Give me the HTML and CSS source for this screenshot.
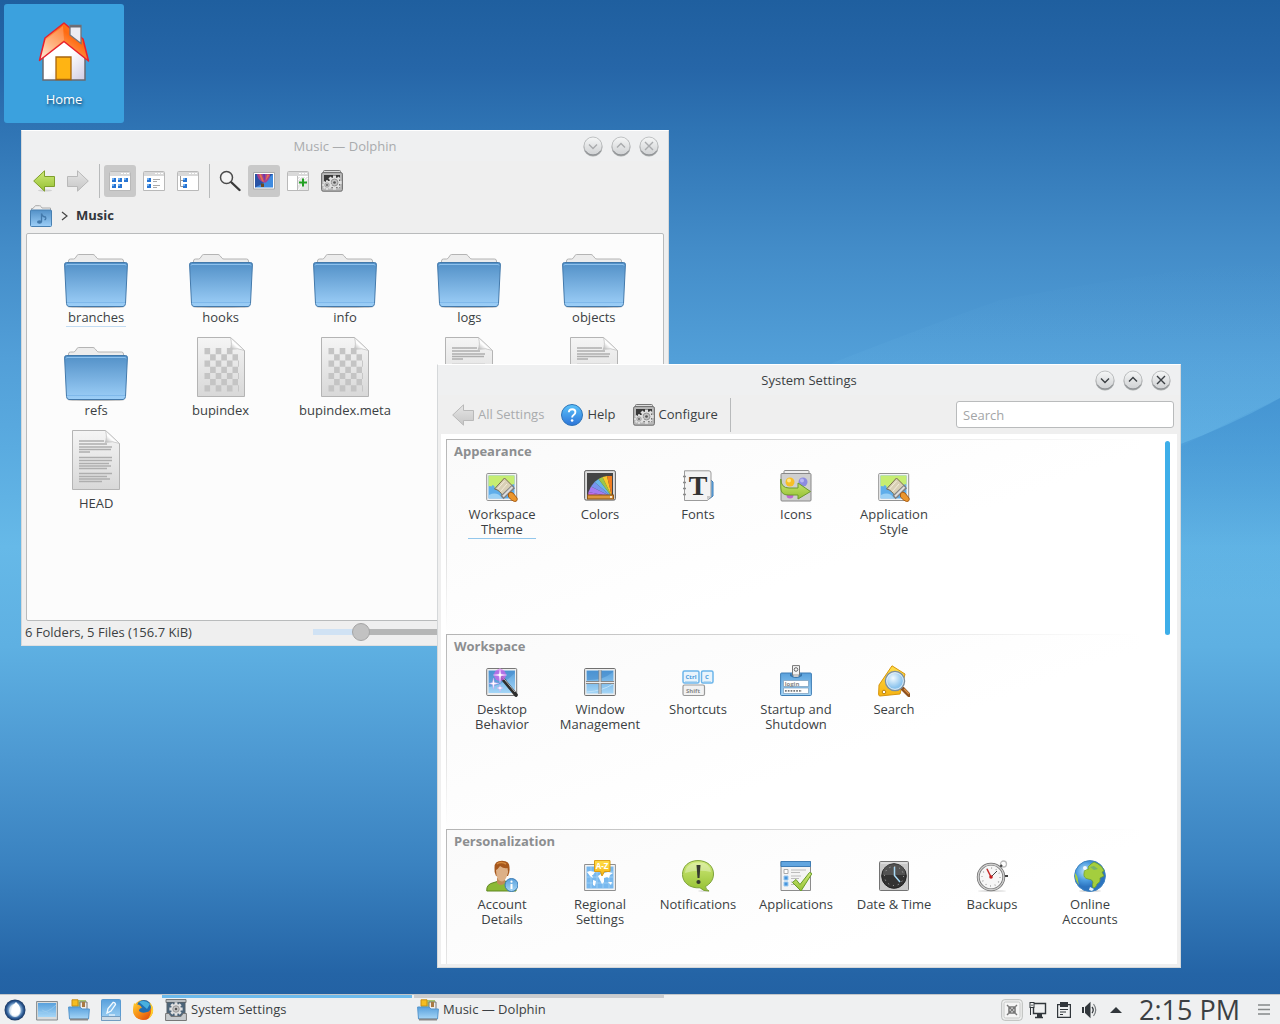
FILE: index.html
```html
<!DOCTYPE html>
<html lang="en">
<head>
<meta charset="utf-8">
<meta name="viewport" content="width=device-width, initial-scale=1">
<title>Plasma Desktop</title>
<link rel="stylesheet" href="styles.css">
</head>
<body>
<svg class="sprite" aria-hidden="true">
  <defs>
    <linearGradient id="g-folder" x1="0" y1="0" x2="0" y2="1"><stop offset="0" stop-color="#5290c7"/><stop offset="1" stop-color="#9dcff8"/></linearGradient>
    <linearGradient id="g-paper" x1="0" y1="0" x2="0" y2="1"><stop offset="0" stop-color="#f5f5f5"/><stop offset="1" stop-color="#d8d8d8"/></linearGradient>
    <linearGradient id="g-fold" x1="0" y1="1" x2="1" y2="0"><stop offset="0" stop-color="#a8a8a8"/><stop offset=".4" stop-color="#ffffff"/><stop offset="1" stop-color="#cdcdcd"/></linearGradient>
    <linearGradient id="g-green" x1="0" y1="0" x2="0" y2="1"><stop offset="0" stop-color="#d0ea7a"/><stop offset="1" stop-color="#94c032"/></linearGradient>
    <linearGradient id="g-gray" x1="0" y1="0" x2="0" y2="1"><stop offset="0" stop-color="#e6e6e6"/><stop offset="1" stop-color="#c6c6c6"/></linearGradient>
    <linearGradient id="g-blue" x1="0" y1="0" x2="0" y2="1"><stop offset="0" stop-color="#58a0dc"/><stop offset="1" stop-color="#a5d6f7"/></linearGradient>
    <linearGradient id="g-help" x1="0" y1="0" x2="0" y2="1"><stop offset="0" stop-color="#5cc4fb"/><stop offset="1" stop-color="#2d74d8"/></linearGradient>
    <linearGradient id="g-yellow" x1="0" y1="0" x2="0" y2="1"><stop offset="0" stop-color="#ffdf4a"/><stop offset="1" stop-color="#f6b312"/></linearGradient>
    <linearGradient id="g-roof" x1="0" y1="1" x2="1" y2="0"><stop offset="0" stop-color="#fff0e0"/><stop offset=".35" stop-color="#ffa060"/><stop offset=".65" stop-color="#ff6a10"/><stop offset="1" stop-color="#ff8030"/></linearGradient>
    <linearGradient id="g-wall" x1="0" y1="0" x2="1" y2="1"><stop offset=".5" stop-color="#ffffff"/><stop offset="1" stop-color="#d0cce4"/></linearGradient>
    <linearGradient id="g-button" x1="0" y1="0" x2="0" y2="1"><stop offset="0" stop-color="#f6f7f7"/><stop offset="1" stop-color="#cfd1d3"/></linearGradient>
    <linearGradient id="g-orange" x1="0" y1="0" x2="1" y2="1"><stop offset="0" stop-color="#ffce2e"/><stop offset=".5" stop-color="#f58a16"/><stop offset="1" stop-color="#dc3d10"/></linearGradient>
    <radialGradient id="g-ring"><stop offset=".55" stop-color="#8db4d8"/><stop offset=".8" stop-color="#2f5c96"/><stop offset="1" stop-color="#16345f"/></radialGradient>
    <radialGradient id="g-globe" cx=".35" cy=".35"><stop offset="0" stop-color="#c0e4fb"/><stop offset=".6" stop-color="#4b9ce0"/><stop offset="1" stop-color="#2c74c0"/></radialGradient>
    <radialGradient id="g-lens" cx=".4" cy=".35"><stop offset="0" stop-color="#f2faff"/><stop offset="1" stop-color="#8cc4ee"/></radialGradient>
  </defs>

  <symbol id="home" viewBox="0 0 64 64">
    <path d="M11 38 32 21 53 39V62H11Z" fill="url(#g-wall)" stroke="#6a6a70" stroke-width="1.5"/>
    <path d="M24 39h15v22.500h-15z" fill="#ffb413" stroke="#a8650e" stroke-width="1.300"/>
    <path d="M32 5 13 20 7.500 42.500 32 23.500 56.500 43 51 21Z" fill="url(#g-roof)" stroke="#e8202c" stroke-width="1.500" stroke-linejoin="round"/>
    <path d="M13.500 22 31 8 32 22 9 40Z" fill="#fff" opacity=".22"/>
    <path d="M38 7.500h11v18l-11-8.500z" fill="#ececf3" stroke="#73737a" stroke-width="1.300"/>
    <path d="M38 8.500h11" stroke="#6b6b72" stroke-width="2"/>
  </symbol>

  <symbol id="folder" viewBox="0 0 64 64">
    <ellipse cx="32" cy="63" rx="28" ry="1" fill="#777" opacity=".5"/>
    <path d="M4.500 20V17q0-2 2-2h3q1.500 0 2.500-2l1.200-1.800q.5-.7 1.500-.7H29q1.200 0 2 1.200l2 2.500q.6.800 2 .8H57.500q2 0 2 2v3z" fill="#ececec" stroke="#b4b4b4"/>
    <path d="M.6 21Q.3 18.500 2.500 18.500H61.500Q63.700 18.500 63.400 21L61.500 59.500Q61.300 62.500 59 62.500H5Q2.700 62.500 2.500 59.500Z" fill="url(#g-folder)" stroke="#4379ab"/>
    <path d="M2 21.500Q2 20.500 3 20.500H61Q62 20.500 62 21.500" fill="none" stroke="#8cc0ec"/>
    <path d="M3 58.500H61" stroke="#7fb8ea"/>
  </symbol>
  <symbol id="page" viewBox="0 0 64 64">
    <path d="M8.500.5H41.500L55.500 13.500V59.500H8.500Z" fill="url(#g-paper)" stroke="#b4b4b4"/>
    <path d="M41.500.5Q43.500 8 41 12.500 49 10.500 55.500 13.500Z" fill="url(#g-fold)" stroke="#bdbdbd" stroke-width=".7"/>
  </symbol>
  <symbol id="file-text" viewBox="0 0 64 64">
    <use href="#page"/>
    <path d="M15 11H40M15 14H43M15 17H48M15 19.500H47M15 22H26M15 27.500H48M15 30.500H48M15 33.500H45M15 36H47M15 38.500H43M15 43.500H48M15 46.500H43M15 49H46M15 51.500H38" stroke="#aeaeae" stroke-width="1.600"/>
  </symbol>
  <symbol id="file-bin" viewBox="0 0 64 64">
    <use href="#page"/>
    <g stroke="#c4c4c4" stroke-width="6.200" fill="none" stroke-dasharray="5.600 5.600">
      <path d="M15.500 14.200H49M15.500 26.600H50M15.500 39H50M15.500 51.400H50"/>
      <path d="M21.100 20.400H49M21.100 32.800H49M21.100 45.200H49"/>
    </g>
  </symbol>

  <symbol id="arrow-left" viewBox="0 0 22 22"><ellipse cx="12" cy="20.500" rx="7" ry="1" opacity=".12"/><path d="M.7 11 11.500.8V6.500H21.500V16.500H11.500V21.200Z" fill="url(#g-green)" stroke="#7f9f2c"/></symbol>
  <symbol id="arrow-left-off" viewBox="0 0 22 22"><path d="M.7 11 11.500.8V6.500H21.500V16.500H11.500V21.200Z" fill="url(#g-gray)" stroke="#b9b9b9"/></symbol>
  <symbol id="arrow-right-off" viewBox="0 0 22 22"><path d="M21.300 11 10.500.8V6.500H.5V16.500H10.500V21.200Z" fill="url(#g-gray)" stroke="#b9b9b9"/></symbol>
  <symbol id="view-frame" viewBox="0 0 22 22"><path d="M.5 2.500Q.5 1.500 1.500 1.500H20.500Q21.500 1.500 21.500 2.500V20.500H.5Z" fill="#fff" stroke="#b9b9b9"/><path d="M1 2H21V6H1Z" fill="#d9d9d9"/><path d="M12 3.500h2M15 3.500h2M18 3.500h2" stroke="#fff"/></symbol>
  <symbol id="view-icons" viewBox="0 0 22 22"><use href="#view-frame"/><path d="M3 8h4v4H3zM9 8h4v4H9zM15 8h4v4h-4zM3 14h4v4H3zM9 14h4v4H9z" fill="#2774d2"/><path d="M3 8h2v2H3zM9 8h2v2H9zM15 8h2v2h-2zM3 14h2v2H3zM9 14h2v2H9z" fill="#72b2f4"/></symbol>
  <symbol id="view-compact" viewBox="0 0 22 22"><use href="#view-frame"/><path d="M4 8h4v4H4zM4 14h4v4H4z" fill="#2774d2"/><path d="M4 8h2v2H4zM4 14h2v2H4z" fill="#72b2f4"/><path d="M10 9.500h7M10 11.500h4M10 15.500h7M10 17.500h4" stroke="#aaa"/></symbol>
  <symbol id="view-tree" viewBox="0 0 22 22"><use href="#view-frame"/><path d="M3.500 6V16.500H6M3.500 10.500H6" stroke="#999" fill="none"/><path d="M6 8h4v4H6zM6 14h4v4H6z" fill="#2774d2"/><path d="M6 8h2v2H6zM6 14h2v2H6z" fill="#72b2f4"/></symbol>
  <symbol id="find" viewBox="0 0 22 22"><path d="M12 12 20.500 20" stroke="#3a3a3a" stroke-width="2.400" stroke-linecap="round"/><circle cx="7.500" cy="7.500" r="6" fill="#f4f4f4" stroke="#4a4a4a" stroke-width="1.500"/></symbol>
  <symbol id="preview" viewBox="0 0 22 22"><path d="M.5 2.500h21v16.500H.5z" fill="#fff" stroke="#aaa"/><path d="M2 4h18v13.500H2z" fill="#3f8be0"/><path d="M2 4h18L9 14 2 17.500z" fill="#213c8c" opacity=".7"/><path d="M4 4H17Q18 8 13 12.500H10Q4 9 4 4Z" fill="#a8408f"/><path d="M6 4.500 8 4 11 12 9 11ZM14 4.500 16.500 5 12.500 11Z" fill="#e5734c"/><path d="M10 4h2l-.5 7z" fill="#5f3fa8"/><path d="M8 13.500h3V17H8z" fill="#6d4a20"/></symbol>
  <symbol id="split" viewBox="0 0 22 22"><use href="#view-frame"/><path d="M11 7h10v13H11z" fill="#e6e6e6"/><path d="M11 10l4-4M11 20l10-12M11 15l8-8" stroke="#fff"/><path d="M10.500 6V20" stroke="#bbb"/><path d="M12 12.500h8M16 8.500v8" stroke="#22a022" stroke-width="2"/></symbol>
  <symbol id="cog" viewBox="-10 -10 20 20">
    <path d="M0-9.500V9.500M-9.500 0H9.500M-6.700-6.700 6.700 6.700M-6.700 6.700 6.700-6.700" stroke="#e0e0e0" stroke-width="4"/>
    <circle r="7" fill="#e0e0e0"/>
    <circle r="4.600" fill="#c4c4c4" stroke="#8f8f8f" stroke-width="1.200"/>
    <circle r="1.800" fill="#555"/>
  </symbol>
  <symbol id="configure" viewBox="0 0 22 22"><path d="M2.500 3V1.500q0-1 1-1h15q1 0 1 1V3" fill="#ddd" stroke="#777"/><rect x=".6" y="2.600" width="20.800" height="18.600" rx="1.500" fill="#b8b8b8" stroke="#6c6c6c"/><path d="M3 5h16v13H3z" fill="#393939"/><use href="#cog" x="6" y="5" width="15" height="15"/><use href="#cog" x="1" y="10" width="10" height="10"/></symbol>
  <symbol id="folder-music" viewBox="0 0 22 22"><path d="M1.500 6V3.500H3L4.500 1.500Q5 .7 6 .7H9.500Q10.500.7 11 1.500L12 3H20.500V6Z" fill="#eee" stroke="#aaa"/><rect x=".5" y="5" width="21" height="16.500" rx="1" fill="url(#g-folder)" stroke="#4880b2"/><path d="M11.500 17V8.500q1 3.500 4 3.500 1 2-1 3" stroke="#4379ab" stroke-width="1.300" fill="none"/><ellipse cx="9.500" cy="17" rx="2.500" ry="1.800" fill="#4379ab"/></symbol>
  <symbol id="help" viewBox="0 0 22 22"><circle cx="11" cy="11" r="10.500" fill="url(#g-help)" stroke="#2e74b8"/><path d="M7.800 8.300Q8 5.200 11.200 5.200q3.200 0 3.200 2.800 0 1.800-1.800 3-1.500 1-1.500 2.600" stroke="#fff" stroke-width="1.900" fill="none"/><circle cx="11.100" cy="16.500" r="1.300" fill="#fff"/></symbol>

  <symbol id="w-base" viewBox="0 0 22 22"><circle cx="11" cy="12" r="9.500" fill="#55585c" opacity=".45"/><circle cx="11" cy="11" r="9" fill="url(#g-button)" stroke="#b4b6b8" stroke-width=".8"/><path d="M3.500 16a9 9 0 0 0 15 0" fill="none" stroke="#85888c"/></symbol>
  <symbol id="w-min" viewBox="0 0 22 22"><use href="#w-base"/><path d="M7 9.500 11 13.500 15 9.500" fill="none" stroke="currentColor" stroke-width="1.400"/></symbol>
  <symbol id="w-max" viewBox="0 0 22 22"><use href="#w-base"/><path d="M7 12.500 11 8.500 15 12.500" fill="none" stroke="currentColor" stroke-width="1.400"/></symbol>
  <symbol id="w-close" viewBox="0 0 22 22"><use href="#w-base"/><path d="M7 7 15 15M15 7 7 15" fill="none" stroke="currentColor" stroke-width="1.400"/></symbol>

  <symbol id="theme" viewBox="0 0 32 32">
    <rect x=".7" y="3.500" width="30" height="27" rx="1" fill="#f4f4f4" stroke="#929292"/><path d="M2.500 5.500h26v23h-26z" fill="#5fadea"/><path d="M2.500 5.500h26v9q-2-1-3 1-2-3-4 0-1 4-2 0-2-2-4 1-1 5-2 0-2-2-3 0-1 5-2 0-2-3-3 0-2-1-3 0z" fill="#c6ed72"/><path d="M3 25q8-4 13 3H3z" fill="#9ad0f5"/>
    <path d="M8.500 19 18.500 8 27 16.500 17 26.500Q14 20 8.500 19Z" fill="#d9d0b6" stroke="#786b4e"/><path d="M11.500 19 18.500 11M14.500 21.500 21 14" stroke="#f3ecda"/><path d="M16 27.500 27.500 16.500" stroke="#808080" stroke-width="4.500"/><path d="M17 26.500 26.500 17" stroke="#ddd" stroke-width="2.200"/><path d="M22.500 23.500Q25 21 27 23L31 28Q32 31.500 28.500 31.500 26 31 22.500 27Z" fill="#eb962d" stroke="#a75d16"/>
  </symbol>
  <symbol id="colors" viewBox="0 0 32 32">
    <rect x=".6" y=".6" width="30.800" height="29.500" rx="1.500" fill="#dcdcdc" stroke="#606060"/><path d="M3 3h26v24H3z" fill="#444"/><path d="M28 27H4L4.500 22Z" fill="#c269eb"/><path d="M28 27 4.500 22 7 16.500Z" fill="#a57af0"/><path d="M28 27 7 16.500 10.500 12Z" fill="#7794ef"/><path d="M28 27 10.500 12 14.500 9Z" fill="#69b5e9"/><path d="M28 27 14.500 9 18.500 7Z" fill="#9ac64a"/><path d="M28 27 18.500 7 23 6Z" fill="#f7c82b"/><path d="M28 27 23 6H28Z" fill="#f07e22"/><rect x="3.500" y="25" width="26" height="4" fill="#dc963d" stroke="#8b5516"/><circle cx="27" cy="27" r="1" fill="#fff"/>
  </symbol>
  <symbol id="icons" viewBox="0 0 32 32">
    <path d="M4 4V1.500q0-1 1-1h23q1 0 1 1V4" fill="#eee" stroke="#8c8c8c"/><rect x="1" y="3.500" width="30" height="27.500" rx="1" fill="#cfcfcf" stroke="#888"/><circle cx="10" cy="12" r="4.500" fill="#f7bf26"/><circle cx="9" cy="10.500" r="2" fill="#ffe68a"/><circle cx="23" cy="12" r="4.500" fill="#8c8be0"/><circle cx="22" cy="10.500" r="2" fill="#b9b8f2"/><circle cx="10" cy="25" r="3.500" fill="#bf67d0"/><path d="M.8 9Q1 18 9 18H18V13L30.500 21.500 18 29V25H8Q1 25 .8 18Z" fill="url(#g-green)" stroke="#6c9a2d"/>
  </symbol>
  <symbol id="desktop" viewBox="0 0 32 32">
    <rect x=".7" y="3.500" width="30" height="27" rx="1" fill="#eee" stroke="#777"/><path d="M2.500 5.500h26.500v22.500h-26.500z" fill="url(#g-blue)"/><path d="M3 22Q18 20 28.500 8V6H3Z" fill="#3f86c8" opacity=".5"/><path d="M16 13 30 30" stroke="#2d2d2d" stroke-width="3.600" stroke-linecap="round"/><path d="M16.500 12 29 27" stroke="#b8b8b8" stroke-width="1"/><circle cx="14" cy="10" r="6" fill="#cf66ec" opacity=".75"/><path d="M14 3 15 9 21 10 15 11 14 18 13 11 7 10 13 9ZM7.500 13 8.300 17.500 13 18.500 8.300 19.500 7.500 24 6.500 19.500 3 18.500 6.500 17.500ZM14 20 14.500 22 17 23 14.500 24 14 26.500 13.500 24 11 23 13.500 22Z" fill="#fff" stroke="#dd9cf6" stroke-width=".4"/>
  </symbol>
  <symbol id="window" viewBox="0 0 32 32">
    <rect x=".6" y="3.500" width="30.800" height="27" rx="1" fill="#eee" stroke="#707070"/><path d="M2.500 5.500h27v23h-27z" fill="url(#g-blue)"/><path d="M3 15Q18 16 29 7V6H3Z" fill="#3f86c8" opacity=".55"/><path d="M3 27Q18 26 29 19" stroke="#bfe1f8" fill="none"/><path d="M16 5V29M2 17.500H30" stroke="#888" stroke-width="3"/><path d="M16 4V30M1 17.500H31" stroke="#eee"/>
  </symbol>
  <symbol id="search" viewBox="0 0 32 32">
    <path d="M14 .8 27 9 22 29 2 31Q.6 31 .6 29L1 20Z" fill="url(#g-yellow)" stroke="#d6950d"/><circle cx="6" cy="27" r="1.800" fill="#fff" stroke="#b8800d"/><path d="M24.500 23.500 31 30" stroke="#8e511e" stroke-width="4" stroke-linecap="round"/><path d="M26 24 31 29" stroke="#da9148" stroke-width="1.200"/><circle cx="17" cy="16" r="9.500" fill="url(#g-lens)" stroke="#7e8f9e" stroke-width="1.500"/><circle cx="17" cy="16" r="8.400" fill="none" stroke="#fff" opacity=".7"/>
  </symbol>
  <symbol id="account" viewBox="0 0 32 32">
    <path d="M.8 31Q0 24 8 22.500L16 20 23 22.500Q31 24 30 31Z" fill="#8cb936" stroke="#5f8720"/><path d="M11 18h8v5q-4 4-8 0z" fill="#c18b58"/><path d="M8.500 8Q8 .8 16 .8T23.500 8Q24 12 22 16H10Q8 12 8.500 8Z" fill="#a6571c"/><path d="M10 10Q12 9 14 6 18 9 21.500 8 23 12 21 16 19 21 16 21.500 12 21 10.500 16Z" fill="#ddb087"/><path d="M11 4q4-3 9 0" stroke="#d48a3f" stroke-width="1.500" fill="none"/><circle cx="25.500" cy="25" r="6.500" fill="url(#g-blue)" stroke="#3a7ab4"/><circle cx="25.500" cy="21.700" r="1.100" fill="#fff"/><path d="M25.500 24V29" stroke="#fff" stroke-width="2"/>
  </symbol>
  <symbol id="notify" viewBox="0 0 32 32">
    <ellipse cx="22" cy="31" rx="6" ry=".8" opacity=".15"/><path d="M16 .6C25 .6 31.500 6 31.500 14 31.500 20 28 24 23.500 26.500Q23.500 29.500 27 31 21.500 31.500 18 27.800C7 28.500.5 22 .5 14.500.5 6 7 .6 16 .6Z" fill="url(#g-green)" stroke="#7da23a"/><path d="M3 13Q4 3 16 2.500T29 12Q16 9 3 13Z" fill="#fff" opacity=".3"/><path d="M14.500 5h4L17.500 18h-2z" fill="#363a30"/><circle cx="16.500" cy="22" r="2.100" fill="#363a30"/>
  </symbol>
  <symbol id="apps" viewBox="0 0 32 32">
    <path d="M1 1.500h29.500v29H1z" fill="#f4f4f4" stroke="#8c8c8c"/><path d="M1 1.500h29.500v5H1z" fill="#61a5df" stroke="#3d7cb5"/><path d="M11 10h15M11 12.500h9M11 16h10M11 18.500h8M11 22h7M11 24.500h5" stroke="#bcbcbc"/><path d="M4 9.500h4v4H4z" fill="#fff" stroke="#aaa"/><path d="M4 16h4v4H4zM4 22h4v4H4z" fill="#4795dc" stroke="#9ecbf0"/><path d="M12.500 22.500 16 19.500 20 24.500 29.500 12.500 32 13.500 21 31Z" fill="url(#g-green)" stroke="#679c25"/>
  </symbol>
  <symbol id="clock" viewBox="0 0 32 32">
    <rect x="1.500" y="1.500" width="29" height="29" rx="1" fill="#c9c9c9" stroke="#737373"/><path d="M3 3h26" stroke="#efefef"/><circle cx="16" cy="16" r="12.300" fill="#333" stroke="#222"/><path d="M4.500 15Q5 4 16 4T27.500 15Z" fill="#777" opacity=".45"/><circle cx="16" cy="16" r="9.500" fill="none" stroke="#bbb" stroke-dasharray="1 3.970"/><path d="M16.500 7V15.500L22 22" stroke="#a7d9f5" stroke-width="1.500" fill="none"/>
  </symbol>
  <symbol id="backups" viewBox="0 0 32 32">
    <ellipse cx="16" cy="31" rx="14" ry="1" opacity=".12"/><circle cx="27.500" cy="4" r="3" fill="none" stroke="#bbb" stroke-width="1.300"/><path d="M23 8 26 5M28 16h4" stroke="#444" stroke-width="2"/><circle cx="15" cy="17" r="12.800" fill="#f7f7f7" stroke="#6a6a6a" stroke-width="2.800"/><circle cx="15" cy="17" r="12.800" fill="none" stroke="#cfcfcf" stroke-width="1.400"/><circle cx="15" cy="17" r="9" fill="none" stroke="#999" stroke-width="1.300" stroke-dasharray=".9 3.810"/><path d="M15 17 11 9" stroke="#c42929" stroke-width="1.500"/><path d="M15 17 21 11" stroke="#444"/><circle cx="15" cy="17" r="1.800" fill="#c42020"/>
  </symbol>
  <symbol id="online" viewBox="0 0 32 32">
    <ellipse cx="16" cy="31" rx="11" ry="1" opacity=".15"/><circle cx="16" cy="16" r="15.400" fill="url(#g-globe)" stroke="#3f83c0"/><path d="M10 13Q10 9 15 9L14 7 17 4 20 2Q28 5 30 11L28 12 30 16 26 18Q27 22 23 24 22 28 19 28 18 24 19 22 18 19 14 19 9 18 10 13Z" fill="#a4ce3e" stroke="#6b9c25" stroke-width=".7"/><path d="M16 7 20 6 24 9 20 10Z" fill="#77b36a"/><path d="M1 13Q4 16 4 21L5 25Q1 20 1 15Z" fill="#a4ce3e"/><path d="M16 27 20 29 18 31 15 30Z" fill="#e7f3fc"/><circle cx="11" cy="8" r="2" fill="#fff" opacity=".9"/>
  </symbol>

  <symbol id="launcher" viewBox="0 0 22 22"><circle cx="11" cy="11" r="10.500" fill="url(#g-ring)"/><ellipse cx="11" cy="11.500" rx="5.800" ry="6.500" fill="#dfe9f2"/><path d="M12 3Q18 8 15 15 12 18 8 16 5 9 12 3Z" fill="#fff"/></symbol>
  <symbol id="show-desktop" viewBox="0 0 22 22"><path d="M.6 2.500h20.800v18.500H.6z" fill="#d9dcdd" stroke="#858a8e"/><path d="M2 4h18v14H2z" fill="url(#g-blue)"/><path d="M2 13Q11 15 20 6M6 11Q12 15 20 15" stroke="#9dcdef" stroke-width=".7" fill="none"/></symbol>
  <symbol id="file-manager" viewBox="0 0 22 22"><path d="M4 1h14v12H4z" fill="#a9c671"/><path d="M4 .8h6V7H4z" fill="#f4bd20" stroke="#c88d14"/><path d="M12 3h7v9h-7z" fill="#eee" stroke="#777"/><path d="M14 3h3v5h-3z" fill="#a97942"/><path d="M.6 8H12L14 10H21.400L20.500 20H1.500Z" fill="url(#g-blue)" stroke="#5596cd"/><path d="M2 19.500H20V21.500H2Z" fill="#888"/></symbol>
  <symbol id="editor" viewBox="0 0 22 22"><rect x="1.500" y=".5" width="19" height="21" rx="1" fill="url(#g-blue)" stroke="#5a9bd2"/><path d="M1.500 17.500h19v4h-19z" fill="#cddbe6" stroke="#739cc0"/><path d="M7 14 8 9.500 13 3.500Q15 3 15.500 5.500L11 12Z" fill="#80bdec" stroke="#f5fbff" stroke-width="1.300"/><path d="M9 16h6" stroke="#fff"/></symbol>
  <symbol id="browser" viewBox="0 0 22 22"><circle cx="11" cy="11" r="10" fill="url(#g-orange)"/><circle cx="12" cy="8.500" r="7.500" fill="#216fb3"/><path d="M7 3Q13 0 18 5L15 10Z" fill="#48b0de"/><path d="M2 4Q4 6 6 5.500 9 6 10 9 7 9 7 12 10 15 15 13 18 13 19 8 23 16 15 20.500 4 22 1.500 14 .7 9 2 4Z" fill="url(#g-orange)"/><path d="M19 8Q18.500 5 17 3 22 7 21 13 20 18 16 20 20 15 19 8Z" fill="#ffd02c"/></symbol>
  <symbol id="settings" viewBox="0 0 22 22"><path d="M1 .5h20v3H1z" fill="#b9bdc0" stroke="#777"/><path d="M2 3.500h18V19H2z" fill="#4c6479" stroke="#56626b"/><use href="#cog" x="4" y="3" width="14" height="14"/><path d="M.6 14.500H4L6 17.500H16L18 14.500H21.400V21.500H.6Z" fill="#c6cacd" stroke="#777"/></symbol>

  <symbol id="tray-x" viewBox="0 0 22 22"><rect x=".7" y=".7" width="20.600" height="20.600" rx="3" fill="#f0f1f1" stroke="#b9bcba"/><rect x="3" y="3" width="16" height="16" rx="1.500" fill="#f5f5f5" stroke="#c6c8c6"/><path d="M6 6 16 16M16 6 6 16" stroke="#777" stroke-width="1.400"/><circle cx="11" cy="11" r="3" fill="none" stroke="#777" stroke-width="1.200"/><path d="M7.500 7.500h7v7h-7z" fill="none" stroke="#888" stroke-width=".8"/></symbol>
  <symbol id="tray-net" viewBox="0 0 18 18"><path d="M5 2.500H16.500V12.500H4.500V7M10.500 13V16M6 16.500H14" stroke="#31363b" stroke-width="1.400" fill="none"/><path d="M8 13h5v3H8z" fill="#31363b"/><rect x="1" y="1.500" width="4" height="5" fill="#eff0f1" stroke="#31363b"/><path d="M3 3.500V5M1.500 6.500V14" stroke="#31363b"/></symbol>
  <symbol id="tray-clip" viewBox="0 0 18 18"><path d="M2.600 3.600H15.400V16.400H2.600Z" fill="none" stroke="#31363b" stroke-width="1.200"/><path d="M5 1H13V6H5Z" fill="#31363b"/><path d="M5 8.500H13M5 11H11M5 13.500H8" stroke="#31363b"/></symbol>
  <symbol id="tray-volume" viewBox="0 0 18 18"><path d="M1 6H3V12H1ZM4 6 9.500.8V17.200L4 12Z" fill="#31363b"/><path d="M11 6Q13.500 9 11 12" stroke="#31363b" stroke-width="1.300" fill="none"/><path d="M12.500 3Q17 9 12.500 15" stroke="#777b7e" stroke-width="1.200" fill="none"/></symbol>
  <symbol id="tray-up" viewBox="0 0 12 6"><path d="M0 6 6 0 12 6Z" fill="#31363b"/></symbol>
  <symbol id="tray-menu" viewBox="0 0 12 12"><path d="M0 1H12M0 5.500H12M0 10H12" stroke="#858889" stroke-width="1.500"/></symbol>
</svg>

<main class="desktop">
  <svg class="wallpaper" viewBox="0 0 1280 994" preserveAspectRatio="none" aria-hidden="true">
    <defs>
      <linearGradient id="wave" x1="0" y1="0" x2="0" y2="1"><stop offset="0" stop-color="#2f80c6" stop-opacity=".42"/><stop offset="1" stop-color="#2f80c6" stop-opacity="0"/></linearGradient>
      <linearGradient id="wave-b" x1="0" y1="0" x2="0" y2="1"><stop offset="0" stop-color="#7cc8f2" stop-opacity="0"/><stop offset="1" stop-color="#7cc8f2" stop-opacity=".18"/></linearGradient>
    </defs>
    <path d="M640 440Q860 350 1000 300 1160 270 1280 260V398Q1180 445 1120 480Z" fill="url(#wave-b)"/>
    <path d="M1080 475Q1190 448 1280 398V600H1080Z" fill="url(#wave)"/>
  </svg>

  <a class="home" href="#home-folder"><svg class="i64"><use href="#home"/></svg><span>Home</span></a>

  <section class="win dolphin" aria-label="Music — Dolphin">
    <header class="titlebar">
      <h1>Music — Dolphin</h1>
      <div class="winbuttons">
        <button type="button" aria-label="Minimize"><svg class="i22"><use href="#w-min"/></svg></button>
        <button type="button" aria-label="Maximize"><svg class="i22"><use href="#w-max"/></svg></button>
        <button type="button" aria-label="Close"><svg class="i22"><use href="#w-close"/></svg></button>
      </div>
    </header>
    <div class="toolbar">
      <button class="tool" type="button" aria-label="Back"><svg class="i22"><use href="#arrow-left"/></svg></button>
      <button class="tool" type="button" aria-label="Forward" disabled><svg class="i22"><use href="#arrow-right-off"/></svg></button>
      <span class="sep"></span>
      <button class="tool on" type="button" aria-label="Icons" aria-pressed="true"><svg class="i22"><use href="#view-icons"/></svg></button>
      <button class="tool" type="button" aria-label="Compact"><svg class="i22"><use href="#view-compact"/></svg></button>
      <button class="tool" type="button" aria-label="Details"><svg class="i22"><use href="#view-tree"/></svg></button>
      <span class="sep"></span>
      <button class="tool" type="button" aria-label="Find"><svg class="i22"><use href="#find"/></svg></button>
      <button class="tool on" type="button" aria-label="Preview" aria-pressed="true"><svg class="i22"><use href="#preview"/></svg></button>
      <button class="tool" type="button" aria-label="Split"><svg class="i22"><use href="#split"/></svg></button>
      <button class="tool" type="button" aria-label="Control"><svg class="i22"><use href="#configure"/></svg></button>
    </div>
    <nav class="crumbs" aria-label="Location">
      <svg class="i22"><use href="#folder-music"/></svg>
      <svg class="chev" viewBox="0 0 8 10"><path d="M1 1 6 5 1 9"/></svg>
      <a href="#music">Music</a>
    </nav>
    <div class="files">
      <a class="file current" href="#branches"><svg class="i64"><use href="#folder"/></svg><span>branches</span></a>
      <a class="file" href="#hooks"><svg class="i64"><use href="#folder"/></svg><span>hooks</span></a>
      <a class="file" href="#info"><svg class="i64"><use href="#folder"/></svg><span>info</span></a>
      <a class="file" href="#logs"><svg class="i64"><use href="#folder"/></svg><span>logs</span></a>
      <a class="file" href="#objects"><svg class="i64"><use href="#folder"/></svg><span>objects</span></a>
      <a class="file" href="#refs"><svg class="i64"><use href="#folder"/></svg><span>refs</span></a>
      <a class="file" href="#bupindex"><svg class="i64"><use href="#file-bin"/></svg><span>bupindex</span></a>
      <a class="file" href="#bupindex-meta"><svg class="i64"><use href="#file-bin"/></svg><span>bupindex.meta</span></a>
      <a class="file" href="#file-4" aria-label="File"><svg class="i64"><use href="#file-text"/></svg></a>
      <a class="file" href="#file-5" aria-label="File"><svg class="i64"><use href="#file-text"/></svg></a>
      <a class="file" href="#head"><svg class="i64"><use href="#file-text"/></svg><span>HEAD</span></a>
    </div>
    <footer class="status">
      <span>6 Folders, 5 Files (156.7 KiB)</span>
      <input class="zoom" type="range" min="0" max="100" value="24" aria-label="Icon size">
    </footer>
  </section>

  <section class="win settings" aria-label="System Settings">
    <header class="titlebar">
      <h1>System Settings</h1>
      <div class="winbuttons">
        <button type="button" aria-label="Minimize"><svg class="i22"><use href="#w-min"/></svg></button>
        <button type="button" aria-label="Maximize"><svg class="i22"><use href="#w-max"/></svg></button>
        <button type="button" aria-label="Close"><svg class="i22"><use href="#w-close"/></svg></button>
      </div>
    </header>
    <div class="toolbar">
      <button class="action" type="button" disabled><svg class="i22"><use href="#arrow-left-off"/></svg>All Settings</button>
      <button class="action" type="button"><svg class="i22"><use href="#help"/></svg>Help</button>
      <button class="action" type="button"><svg class="i22"><use href="#configure"/></svg>Configure</button>
      <span class="sep"></span>
      <input class="search" type="search" placeholder="Search" aria-label="Search">
    </div>
    <div class="panel">
      <div class="groups">
        <section class="group">
          <h2>Appearance</h2>
          <div class="modules">
            <a class="module current" href="#workspace-theme"><svg class="i32"><use href="#theme"/></svg><span>Workspace<br>Theme</span></a>
            <a class="module" href="#m-colors"><svg class="i32"><use href="#colors"/></svg><span>Colors</span></a>
            <a class="module" href="#m-fonts">
              <svg class="i32" viewBox="0 0 32 32">
                <path d="M27 8 31 12V26L27 29Z" fill="#65adea" stroke="#3c7cb6"/><path d="M2.500.8H27Q29 .8 29 3V26.500L25.500 30.500H2.500Z" fill="#f3f3f3" stroke="#9b9b9b"/><path d="M25 30 29 26H25Z" fill="#c9c9c9"/><path d="M1 6.500h3M1 12.500h3M1 18.500h3M1 24.500h3" stroke="#888" stroke-width="1.300"/>
                <text x="16" y="25" class="glyph-serif">T</text>
              </svg>
              <span>Fonts</span></a>
            <a class="module" href="#m-icons"><svg class="i32"><use href="#icons"/></svg><span>Icons</span></a>
            <a class="module" href="#application-style"><svg class="i32"><use href="#theme"/></svg><span>Application<br>Style</span></a>
          </div>
        </section>
        <section class="group">
          <h2>Workspace</h2>
          <div class="modules">
            <a class="module" href="#m-desktop"><svg class="i32"><use href="#desktop"/></svg><span>Desktop<br>Behavior</span></a>
            <a class="module" href="#m-window"><svg class="i32"><use href="#window"/></svg><span>Window<br>Management</span></a>
            <a class="module" href="#m-shortcuts">
              <svg class="i32" viewBox="0 0 32 32">
                <rect x="1" y="6" width="16" height="12" rx="1.500" fill="#e9f4fc" stroke="#6cb5ea" stroke-width="1.500"/><rect x="19.500" y="6" width="11.500" height="12" rx="1.500" fill="#e9f4fc" stroke="#6cb5ea" stroke-width="1.500"/><rect x="1" y="20" width="21.500" height="10.500" rx="1.500" fill="#f2f2f2" stroke="#999" stroke-width="1.200"/><path d="M3 16.500H15M21.500 16.500H29" stroke="#b5d9f2"/>
                <text x="9" y="14" class="key key-blue">Ctrl</text><text x="25" y="14" class="key key-blue">C</text><text x="11" y="28" class="key">Shift</text>
              </svg>
              <span>Shortcuts</span></a>
            <a class="module" href="#m-startup">
              <svg class="i32" viewBox="0 0 32 32">
                <rect x=".6" y="8" width="30.800" height="22.500" rx="1" fill="url(#g-blue)" stroke="#3e7db4"/><path d="M10 8Q16 15 22 8V11Q16 15 10 11Z" fill="#3975ab"/><path d="M12.500.6h7v9.500h-7z" fill="#f5f5f5" stroke="#777"/><circle cx="16" cy="4.500" r="1.800" fill="none" stroke="#666"/><path d="M13.500 9h5v3h-5z" fill="#c8c8c8"/><path d="M3.500 15.500h25v6h-25zM3.500 23h25v5.500h-25z" fill="#fff" stroke="#799bb9" stroke-width=".7"/><text x="12" y="20.500" class="key">login</text><path d="M5 25.800H22" stroke="#777" stroke-width="1.800" stroke-dasharray="1.700 1.100"/>
              </svg>
              <span>Startup and<br>Shutdown</span></a>
            <a class="module" href="#m-search"><svg class="i32"><use href="#search"/></svg><span>Search</span></a>
          </div>
        </section>
        <section class="group">
          <h2>Personalization</h2>
          <div class="modules">
            <a class="module" href="#m-account"><svg class="i32"><use href="#account"/></svg><span>Account<br>Details</span></a>
            <a class="module" href="#m-regional">
              <svg class="i32" viewBox="0 0 32 32">
                <path d="M.6 4.500h30.800v26H.6z" fill="#f6f6f6" stroke="#8f8f8f"/><path d="M2.500 6.500h27v22h-27z" fill="#78b8ee"/><path d="M7 7V28M13 7V28M19 7V28M25 7V28M3 12H29M3 17H29M3 23H29" stroke="#a9d5f7" stroke-width=".7"/><path d="M3 12 6 11 11 12 9 15 8 15 9 18 6 16ZM9 20 12 21 11 26 9 25ZM14 16 17 14 24 12 29 13 26 15 25 18 23 17 20 18 20 22 18 24 16 20ZM24 22 28 22 27 25Z" fill="#fff"/><path d="M10.500.6H26V11.500H20.500L18 16 16.500 11.500H10.500Z" fill="url(#g-yellow)" stroke="#dc9b12"/><text x="18" y="9" class="tag">A-Z</text>
              </svg>
              <span>Regional<br>Settings</span></a>
            <a class="module" href="#m-notify"><svg class="i32"><use href="#notify"/></svg><span>Notifications</span></a>
            <a class="module" href="#m-apps"><svg class="i32"><use href="#apps"/></svg><span>Applications</span></a>
            <a class="module" href="#m-date"><svg class="i32"><use href="#clock"/></svg><span>Date &amp; Time</span></a>
            <a class="module" href="#m-backups"><svg class="i32"><use href="#backups"/></svg><span>Backups</span></a>
            <a class="module" href="#m-online"><svg class="i32"><use href="#online"/></svg><span>Online<br>Accounts</span></a>
          </div>
        </section>
      </div>
      <div class="scrollbar"></div>
    </div>
  </section>
</main>

<footer class="taskbar">
  <div class="launchers">
    <button type="button" aria-label="Application Launcher"><svg class="i22"><use href="#launcher"/></svg></button>
    <button type="button" aria-label="Show Desktop"><svg class="i22"><use href="#show-desktop"/></svg></button>
    <button type="button" aria-label="File Manager"><svg class="i22"><use href="#file-manager"/></svg></button>
    <button type="button" aria-label="Text Editor"><svg class="i22"><use href="#editor"/></svg></button>
    <button type="button" aria-label="Web Browser"><svg class="i22"><use href="#browser"/></svg></button>
  </div>
  <div class="tasks">
    <button class="task active" type="button"><svg class="i22"><use href="#settings"/></svg>System Settings</button>
    <button class="task" type="button"><svg class="i22"><use href="#file-manager"/></svg>Music — Dolphin</button>
  </div>
  <div class="tray">
    <button type="button" aria-label="Input"><svg class="i22"><use href="#tray-x"/></svg></button>
    <button type="button" aria-label="Network"><svg class="i18"><use href="#tray-net"/></svg></button>
    <button type="button" aria-label="Clipboard"><svg class="i18"><use href="#tray-clip"/></svg></button>
    <button type="button" aria-label="Volume"><svg class="i18"><use href="#tray-volume"/></svg></button>
    <button type="button" aria-label="Show hidden icons"><svg class="i-up"><use href="#tray-up"/></svg></button>
  </div>
  <time class="clock">2:15 PM</time>
  <button class="menu" type="button" aria-label="Panel menu"><svg class="i12"><use href="#tray-menu"/></svg></button>
</footer>
</body>
</html>
```
FILE: styles.css
```css
* { box-sizing: border-box; }

body {
  margin: 0;
  min-height: 100vh;
  display: flex;
  flex-direction: column;
  font: 13px/17px "Open Sans", "Noto Sans", sans-serif;
  color: #3b3f43;
  background: #2362a4;
}

button {
  margin: 0;
  padding: 0;
  border: 0;
  background: none;
  font: inherit;
  color: inherit;
  display: flex;
  align-items: center;
}

a { color: inherit; text-decoration: none; }
svg { display: block; flex: none; }
.sprite { position: absolute; width: 0; height: 0; }
.i12 { width: 12px; height: 12px; }
.i18 { width: 18px; height: 18px; }
.i22 { width: 22px; height: 22px; }
.i32 { width: 32px; height: 32px; }
.i64 { width: 64px; height: 64px; }
.i-up { width: 12px; height: 6px; }

.glyph-serif { font: bold 28px "Liberation Serif", serif; text-anchor: middle; fill: #333; }
.key { font: bold 6px "Open Sans", sans-serif; text-anchor: middle; fill: #888; }
.key-blue { fill: #4a9bdd; }
.tag { font: bold 8px "Open Sans", sans-serif; text-anchor: middle; fill: #fff; }

/* Desktop */
.desktop {
  position: relative;
  flex: 1;
  overflow: hidden;
  background: linear-gradient(#1f5f9f, #2666a8 7%, #2f74b4 13%, #438cc8 25%, #529fd8 36%, #5aabe0 45%, #66b9e8 55%, #5eb0e2 65%, #4d99d2 76%, #3a82c0 87%, #2464a6 98%, #2362a4);
}
.wallpaper { position: absolute; inset: 0; width: 100%; height: 100%; }
.home {
  position: absolute;
  left: 4px;
  top: 4px;
  width: 120px;
  height: 119px;
  padding-top: 14px;
  display: flex;
  flex-direction: column;
  align-items: center;
  gap: 9px;
  border-radius: 3px;
  background: #3ba1de;
  color: #fff;
  font-weight: 500;
  text-shadow: 1px 2px 3px #123a60;
}

/* Window frame */
.win {
  position: absolute;
  display: flex;
  flex-direction: column;
  background: #efefef;
  border: 1px solid #d5d8da;
  border-top-color: #fff;
}
.dolphin { left: 21px; top: 130px; width: 648px; height: 516px; border-bottom-color: #dfe0e1; }
.settings { left: 437px; top: 364px; width: 744px; height: 604px; }

.titlebar {
  height: 30px;
  display: grid;
  grid-template-columns: 1fr auto 1fr;
  align-items: center;
  padding: 0 8px;
  background: #eff0f1;
}
.titlebar h1 { grid-column: 2; margin: 0; font: inherit; }
.dolphin h1, .dolphin .winbuttons { color: #a9abad; }
.winbuttons { display: flex; justify-content: flex-end; gap: 6px; }

.toolbar { display: flex; align-items: center; }
.dolphin .toolbar { height: 40px; padding: 0 6px; gap: 2px; }
.settings .toolbar { height: 39px; padding: 0 6px 0 14px; }
.tool { width: 32px; height: 32px; justify-content: center; border-radius: 3px; }
.tool.on { background: #c9c9c9; }
.sep { width: 1px; height: 34px; background: #b8babb; }
.dolphin .sep { margin: 0 2px 0 3px; }
.action { gap: 4px; margin-right: 17px; }
.action:disabled { color: #a9abad; }
.settings .sep { margin-left: -5px; }
.search {
  width: 218px;
  height: 27px;
  margin-left: auto;
  padding: 0 6px;
  border: 1px solid #b9bbbc;
  border-radius: 3px;
  background: #fff;
  font: inherit;
  appearance: none;
}
.search::placeholder { color: #a3a5a7; }

/* File manager */
.crumbs { height: 32px; display: flex; align-items: center; padding: 0 8px 3px; font-weight: 700; color: #31363b; }
.chev { width: 8px; height: 10px; margin: 0 7px 0 9px; fill: none; stroke: #444; stroke-width: 1.2; }
.files {
  flex: 1;
  margin: 0 4px;
  padding: 10px 7px;
  display: grid;
  grid-template-columns: repeat(5, 1fr);
  grid-auto-rows: 93px;
  align-content: start;
  background: #fcfcfc;
  border: 1px solid #b9bbbc;
  border-radius: 2px;
}
.file { display: flex; flex-direction: column; align-items: center; }
.file span { padding: 1px 2px 0; }
.file.current span { border-bottom: 1px solid #c3dcf2; }
.status { height: 24px; display: flex; align-items: center; padding: 0 3px 2px; }
.zoom {
  appearance: none;
  width: 180px;
  height: 18px;
  margin: 0 172px 0 auto;
  background: linear-gradient(90deg, #d0e2f4 26%, #b5b6b6 26%) center / 100% 6px no-repeat;
  border-radius: 3px;
}
.zoom::-webkit-slider-thumb {
  appearance: none;
  width: 18px;
  height: 18px;
  border: 1px solid #a5a5a5;
  border-radius: 50%;
  background: #c2c2c2;
}

/* System settings */
.panel {
  flex: 1;
  min-height: 0;
  margin: 0 3px 3px;
  padding: 5px 7px 0 5px;
  display: flex;
  gap: 26px;
  overflow: hidden;
  background: #fff;
}
.groups { flex: 1; }
.group {
  height: 195px;
  padding: 3px 0 0 7px;
  border: solid transparent;
  border-width: 1px 0 0 1px;
  background:
    linear-gradient(90deg, #b4b4b4, #e2e2e2 60%, #fff) top / 100% 1px no-repeat border-box,
    linear-gradient(#b4b4b4, #fff) left / 1px 100% no-repeat border-box,
    linear-gradient(160deg, #fafafa, #fff 60%) border-box;
}
.group h2 { margin: 0 0 10px; font-size: 13px; line-height: 17px; color: #8c8e90; }
.modules { display: flex; margin-left: -1px; }
.module { width: 98px; display: flex; flex-direction: column; align-items: center; gap: 5px; line-height: 15px; text-align: center; }
.module.current span { width: 68px; padding-bottom: 1px; border-bottom: 1px solid #93c7ec; }
.scrollbar { width: 6px; height: 194px; margin-top: 2px; border-radius: 3px; background: #3daee9; }

/* Panel */
.taskbar { height: 30px; display: flex; align-items: center; padding: 0 10px 0 4px; background: #eff0f1; border-top: 1px solid #c3c6c9; }
.launchers { display: flex; gap: 10px; }
.tasks { flex: 1; display: flex; align-self: stretch; gap: 2px; margin-left: 8px; }
.task { width: 250px; gap: 4px; padding: 0 3px 3px; border-top: 3px solid #cacccf; }
.task.active { border-top-color: #6dbbed; }
.tray { display: flex; align-items: center; gap: 8px; }
.tray button:first-child { margin-right: -2px; }
.tray button:last-child { margin-left: 3px; }
.clock { margin: 0 18px 0 17px; font-size: 27px; line-height: 29px; }
```
